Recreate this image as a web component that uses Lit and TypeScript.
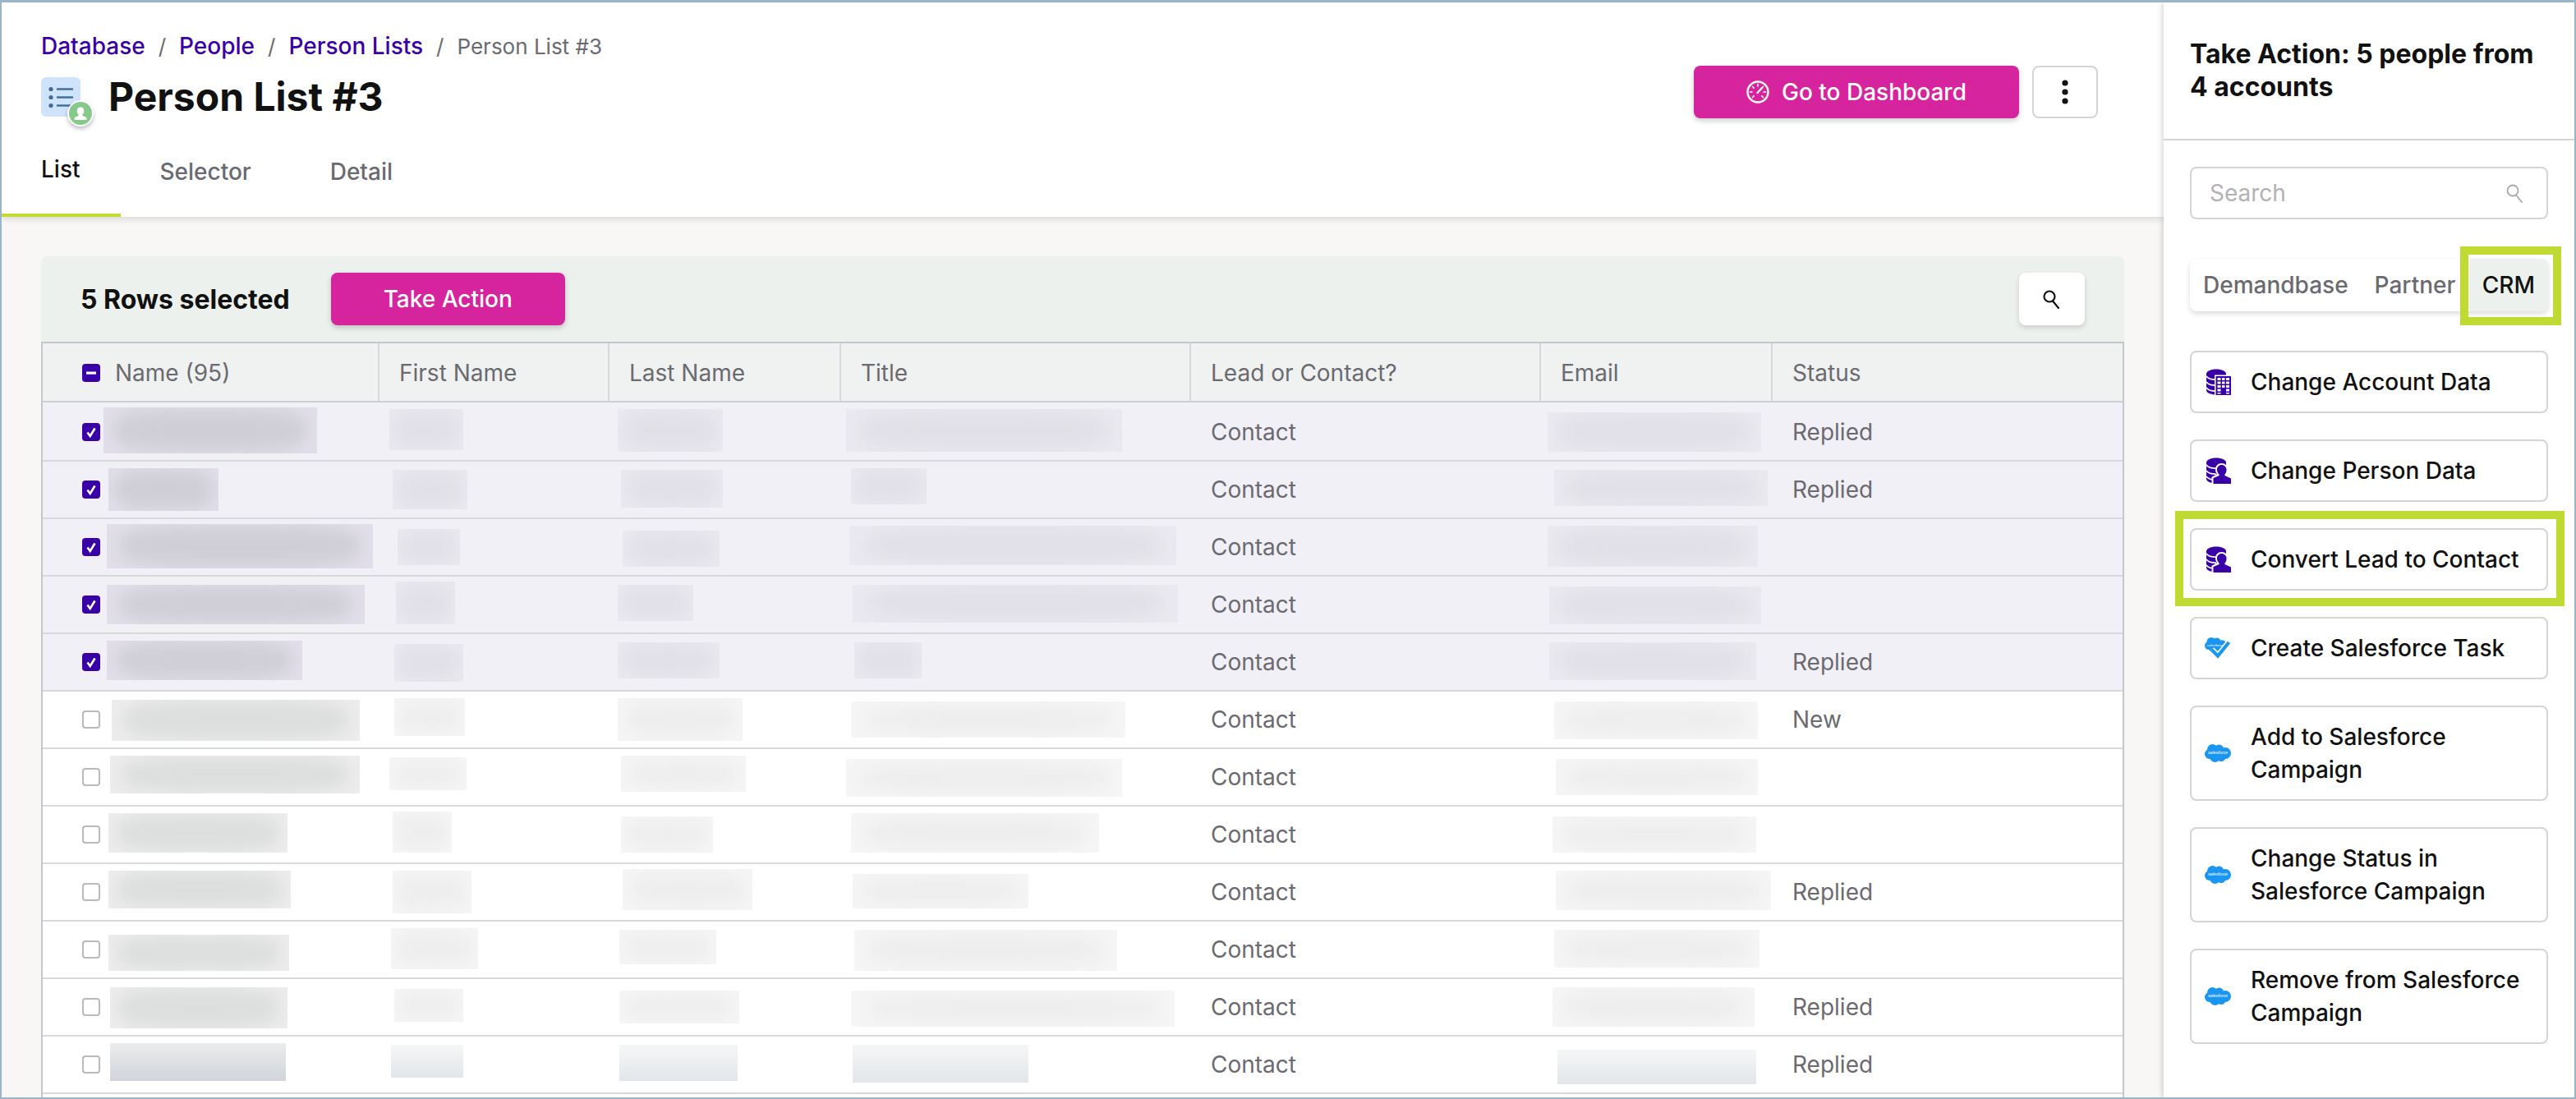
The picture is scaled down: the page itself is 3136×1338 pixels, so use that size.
import { LitElement, html, css, svg } from "lit";
import { customElement } from "lit/decorators.js";

type Box = [number, number, number, number];
interface Row {
  sel: boolean;
  status: string;
  name: Box;
  first: Box;
  last: Box;
  title: Box;
  email: Box;
}

const ROWS: Row[] = [
  { sel: true, status: "Replied", name: [126, 386, 496, 552], first: [474, 564, 498, 548], last: [752, 880, 498, 550], title: [1030, 1366, 498, 550], email: [1884, 2144, 502, 550] },
  { sel: true, status: "Replied", name: [132, 266, 570, 622], first: [478, 569, 572, 620], last: [756, 880, 572, 618], title: [1036, 1128, 570, 614], email: [1892, 2152, 572, 616] },
  { sel: true, status: "", name: [130, 454, 638, 692], first: [484, 560, 644, 688], last: [758, 876, 646, 690], title: [1034, 1432, 640, 688], email: [1884, 2140, 640, 690] },
  { sel: true, status: "", name: [130, 444, 712, 760], first: [482, 554, 708, 760], last: [752, 844, 712, 756], title: [1038, 1434, 712, 758], email: [1886, 2144, 714, 760] },
  { sel: true, status: "Replied", name: [130, 368, 780, 828], first: [480, 564, 784, 830], last: [752, 876, 782, 826], title: [1040, 1122, 782, 826], email: [1886, 2138, 782, 828] },
  { sel: false, status: "New", name: [136, 438, 852, 902], first: [480, 566, 850, 896], last: [752, 904, 850, 902], title: [1036, 1370, 854, 898], email: [1892, 2140, 854, 900] },
  { sel: false, status: "", name: [134, 438, 920, 966], first: [474, 568, 922, 962], last: [756, 908, 920, 964], title: [1030, 1366, 924, 970], email: [1894, 2140, 924, 968] },
  { sel: false, status: "", name: [132, 350, 990, 1038], first: [478, 550, 988, 1038], last: [756, 868, 994, 1038], title: [1036, 1338, 990, 1038], email: [1890, 2138, 994, 1038] },
  { sel: false, status: "Replied", name: [132, 354, 1060, 1106], first: [478, 574, 1060, 1112], last: [758, 916, 1058, 1108], title: [1038, 1252, 1064, 1106], email: [1894, 2156, 1060, 1108] },
  { sel: false, status: "", name: [132, 352, 1138, 1182], first: [476, 582, 1130, 1180], last: [754, 872, 1132, 1174], title: [1040, 1360, 1132, 1182], email: [1892, 2142, 1132, 1178] },
  { sel: false, status: "Replied", name: [134, 350, 1202, 1252], first: [480, 564, 1204, 1244], last: [754, 900, 1206, 1246], title: [1036, 1430, 1206, 1250], email: [1890, 2136, 1202, 1250] },
  { sel: false, status: "Replied", name: [134, 348, 1270, 1316], first: [476, 564, 1272, 1312], last: [754, 898, 1272, 1316], title: [1038, 1252, 1272, 1318], email: [1896, 2138, 1278, 1320] },
];

const PURPLE = "#3a00a8";

const dbBody = svg`
  <path fill="${PURPLE}" d="M2 6C2 3 7 .5 14 .5S26 3 26 6v20c0 3-5 5.5-12 5.5S2 29 2 26z" />
  <path fill="none" stroke="#fff" stroke-width="1.6" d="M2 9c2 3 7 4.2 12 4.2M2 16c2 3 7 4.2 12 4.2M2 23c2 3 7 4.2 12 4.2" />`;

const dbBuilding = html`<svg class="ico" viewBox="0 0 32 32">
  ${dbBody}
  <rect x="12" y="7.5" width="20" height="24.5" fill="#fff" />
  <rect x="13.5" y="9" width="18.5" height="23" fill="${PURPLE}" />
  <path fill="#fff" d="M15.5 11h4v3h-4zM21 11h3.5v3H21zM26 11h4v3h-4zM15.5 15.5h4v3h-4zM21 15.5h3.5v3H21zM26 15.5h4v3h-4zM15.5 20h4v3h-4zM21 20h3.5v3H21zM26 20h4v3h-4zM15.5 24.5h4v3h-4zM26 24.5h4v3h-4zM15.5 29h4v1.5h-4zM26 29h4v1.5h-4z" />
</svg>`;

const dbPerson = html`<svg class="ico" viewBox="0 0 32 32">
  ${dbBody}
  <path fill="#fff" d="M20.5 7c-4.4 0-7.5 3.4-7.5 7.6 0 2.3.8 4.2 2 5.6l-6.5 3.5V32H32v-8.3l-5-3.3c1.2-1.4 1.5-3.5 1.5-5.8C28.5 10.4 24.9 7 20.5 7z" />
  <path fill="${PURPLE}" d="M20.5 9c-3.2 0-5.5 2.5-5.5 5.7 0 2.4 1 4.6 2.6 5.8v1.5l-7.1 3V32H32v-6.5l-7.6-3.5v-1.5c1.6-1.2 2.1-3.4 2.1-5.8C26.5 11.5 23.7 9 20.5 9z" />
</svg>`;

const cloudShape = svg`
  <circle cx="9.5" cy="6.5" r="6.5" /><circle cx="17.5" cy="6" r="5.5" /><circle cx="25" cy="11" r="7" />
  <circle cx="6" cy="12" r="6" /><circle cx="12.5" cy="15.5" r="6.5" /><circle cx="20" cy="15.5" r="5.5" />`;

const cloud = html`<svg class="ico cloud" viewBox="0 0 32 22">
  <g fill="#1b96f0">${cloudShape}</g>
  <text x="16" y="12.3" text-anchor="middle" class="sf">salesforce</text>
</svg>`;

const cloudTask = html`<svg class="ico task" viewBox="0 0 32 26">
  <g fill="#1b96f0" transform="scale(.84)">${cloudShape}</g>
  <text x="12.5" y="10.5" text-anchor="middle" class="sf small">salesforce</text>
  <path fill="none" stroke="#fff" stroke-width="7.5" d="M8.5 15l7.5 7.5L29.5 6" />
  <path fill="none" stroke="#1b96f0" stroke-width="4.2" d="M8.5 15l7.5 7.5L29.5 6" />
</svg>`;

const magnifier = (c: string, w: number) => html`<svg class="mag" viewBox="0 0 24 24" fill="none" stroke="${c}" stroke-width="${w}">
  <circle cx="9" cy="9" r="6.5" /><path d="M13 14.5 20 23" stroke-linecap="round" />
</svg>`;

@customElement("app-root")
export class AppRoot extends LitElement {
  static styles = css`
    :host {
      display: flex;
      box-sizing: border-box;
      width: 3136px;
      height: 1338px;
      padding: 3px 2px 2px 2px;
      background: #9ab6c6;
      overflow: hidden;
      font-family: "Inter", "Liberation Sans", sans-serif;
      font-size: 28px;
      color: #111;
    }
    .frame { flex: 1; display: flex; min-width: 0; min-height: 0; overflow: hidden; background: #fff; }
    .main { flex: 1; min-width: 0; display: flex; flex-direction: column; background: #f8f7f5; }

    .top { position: relative; z-index: 1; height: 261px; flex: none; box-sizing: border-box; background: #fff; box-shadow: 0 2px 8px rgba(0, 0, 0, .14); display: flex; flex-direction: column; }
    .top-row { flex: 1; display: flex; justify-content: space-between; padding: 33px 80px 0 48px; }
    .crumbs { display: flex; align-items: center; height: 40px; font-size: 28px; font-weight: 500; color: #3a00a8; }
    .crumbs .sep { margin: 0 16px; color: #6a6a70; font-weight: 400; font-size: 26px; }
    .crumbs .cur { color: #6a6a70; font-weight: 400; font-size: 26px; }
    .titlerow { display: flex; align-items: center; gap: 34px; margin-top: 18px; height: 48px; }
    .listicon { position: relative; width: 48px; height: 48px; border-radius: 6px; background: #cfe3fa; }
    .listicon svg.l { display: block; width: 48px; height: 48px; }
    .badge { position: absolute; left: 32px; top: 28px; width: 32px; height: 32px; box-sizing: border-box; border: 2px solid #fff; border-radius: 50%; background: #86c98a; box-shadow: 0 3px 5px rgba(0, 0, 0, .25); }
    .badge svg { display: block; width: 28px; height: 28px; }
    h1 { margin: 0; font-size: 48px; font-weight: 700; line-height: 48px; color: #111; }
    .actions { display: flex; gap: 16px; margin-top: 44px; height: 64px; }
    .btn-pink { display: flex; align-items: center; justify-content: center; height: 64px; border: 0; border-radius: 8px; background: #d6249f; color: #fff; font: 500 28px "Inter", sans-serif; box-shadow: 0 3px 6px rgba(0, 0, 0, .2); }
    .go { width: 396px; gap: 15px; }
    .go svg { width: 28px; height: 28px; }
    .kebab { box-sizing: border-box; width: 80px; height: 64px; border: 2px solid #d4d4d4; border-radius: 8px; background: #fff; display: flex; align-items: center; justify-content: center; }
    .kebab svg { width: 10px; height: 32px; }

    .tabs { display: flex; height: 104px; flex: none; }
    .tab { display: flex; align-items: center; box-sizing: border-box; padding: 0 48px 2px; border-bottom: 4px solid transparent; color: #6a6a70; font-weight: 500; }
    .tab.on { padding: 0 49px 8px 48px; color: #111; border-bottom-color: #c3da30; }

    .content { flex: 1; min-height: 0; padding: 48px 48px 0 48px; display: flex; flex-direction: column; }
    .toolbar { height: 104px; flex: none; box-sizing: border-box; display: flex; align-items: center; padding: 0 48px; background: #edf1ed; border-radius: 8px 8px 0 0; }
    .count { font-size: 32px; font-weight: 700; margin-right: 50px; }
    .take { width: 285px; }
    .spacer { flex: 1; }
    .iconbtn { width: 80px; height: 64px; background: #fff; border-radius: 8px; box-shadow: 0 3px 6px rgba(0, 0, 0, .15); display: flex; align-items: center; justify-content: center; }
    .mag { width: 24px; height: 24px; }

    .table { flex: 1; min-height: 0; overflow: hidden; background: #fff; border: solid #c4c8cc; border-width: 2px 2px 0 2px; }
    .grid { display: grid; grid-template-columns: 410px 280px 282px 426px 426px 282px 426px; }
    .head { height: 72px; box-sizing: border-box; background: #f0f1f1; border-bottom: 2px solid #ccced2; color: #6a6a70; }
    .head > div { display: flex; align-items: center; box-sizing: border-box; padding: 1px 0 0 24px; border-right: 2px solid #d4d8dc; }
    .head > div:last-child { border-right: 0; }
    .head > div:first-child, .row > div:first-child { padding-left: 48px; gap: 18px; }
    .row { position: relative; height: 70px; box-sizing: border-box; border-bottom: 2px solid #d6dadd; color: #6a6a70; background: #fff; }
    .head + .row { height: 72px; padding-top: 1px; }
    .row.sel { background: #f2f0f7; }
    .row > div { display: flex; align-items: center; box-sizing: border-box; padding-left: 24px; }

    .cb { flex: none; width: 22px; height: 22px; box-sizing: border-box; border-radius: 4px; border: 2px solid #b8bac0; background: #fff; }
    .cb.on { border: 0; background: #3a00a8; }
    .cb svg { display: block; width: 22px; height: 22px; }

    .patch { position: absolute; overflow: hidden; background: #f6f6f6; }
    .patch i { position: absolute; inset: 4% 5%; border-radius: 30%; background: #eeeeee; filter: blur(10px); }
    .patch.n { background: #ecedec; }
    .patch.n i { background: #dcdddd; }
    .sel .patch { background: #ebe9f0; }
    .sel .patch i { background: #e1e0e7; }
    .sel .patch.n { background: #e2dfea; }
    .sel .patch.n i { background: #cfced6; }
    .fade .patch { background: linear-gradient(#f5f6f6, #e2e6e9); }
    .fade .patch i { background: transparent; }
    .fade .patch.n { background: linear-gradient(#ebecec, #d1d5d9); }

    aside { flex: none; width: 500px; box-sizing: border-box; position: relative; z-index: 2; background: #fff; box-shadow: -2px 0 6px rgba(0, 0, 0, .16); display: flex; flex-direction: column; }
    .aside-head { height: 168px; flex: none; box-sizing: border-box; padding: 43px 32px 0; border-bottom: 2px solid #d4d4d4; font-size: 32px; line-height: 40px; font-weight: 700; }
    .aside-body { padding: 32px 32px 0; display: flex; flex-direction: column; }
    .search { height: 64px; box-sizing: border-box; border: 2px solid #d4d4d4; border-radius: 8px; display: flex; align-items: center; justify-content: space-between; padding: 0 26px 0 22px; color: #b2b2b6; }
    .seg { margin-top: 48px; height: 64px; display: flex; background: #fff; border-radius: 8px; box-shadow: 0 3px 6px rgba(0, 0, 0, .14); color: #6a6a70; font-weight: 500; }
    .seg span { display: flex; align-items: center; padding: 0 16px; position: relative; }
    .seg .crm { margin-left: auto; color: #111; background: #edf1ed; border-radius: 0 8px 8px 0; }
    .mark { position: absolute; border: 10px solid #bfda33; pointer-events: none; }
    .crm .mark { left: -11px; right: -16px; top: -15px; bottom: -17px; }
    .act .mark { left: -20px; right: -22px; top: -23px; bottom: -21px; }

    .list { margin-top: 48px; display: flex; flex-direction: column; gap: 32px; }
    .act { position: relative; display: flex; align-items: center; gap: 24px; box-sizing: border-box; min-height: 76px; padding: 16px 16px; border: 2px solid #d4d4d4; border-radius: 8px; line-height: 40px; font-weight: 500; color: #111; }
    .ico { flex: none; width: 32px; height: 32px; }
    .ico.cloud { height: 22px; }
    .ico.task { height: 26px; }
    .sf { font: italic 5.3px "Liberation Sans", sans-serif; fill: #fff; }
    .sf.small { font-size: 4.3px; }
  `;

  private patch(b: Box, rowTop: number, cls = "") {
    const s = `left:${b[0] - 52}px;top:${b[2] - rowTop}px;width:${b[1] - b[0]}px;height:${b[3] - b[2]}px`;
    return html`<span class="patch ${cls}" style=${s}><i></i></span>`;
  }

  private renderRow(r: Row, i: number) {
    const top = i === 0 ? 490 : 492 + 70 * i;
    return html`<div class="grid row ${r.sel ? "sel" : ""} ${i === 11 ? "fade" : ""}">
      <div>
        <span class="cb ${r.sel ? "on" : ""}">
          ${r.sel
            ? html`<svg viewBox="0 0 22 22"><path d="M6.5 11.5l3.2 4.5 5.8-9.5" fill="none" stroke="#fff" stroke-width="2.6" /></svg>`
            : ""}
        </span>
        ${this.patch(r.name, top, "n")}
      </div>
      <div>${this.patch(r.first, top)}</div>
      <div>${this.patch(r.last, top)}</div>
      <div>${this.patch(r.title, top)}</div>
      <div>Contact</div>
      <div>${this.patch(r.email, top)}</div>
      <div>${r.status}</div>
    </div>`;
  }

  render() {
    const actions = [
      { t: "Change Account Data", i: dbBuilding },
      { t: "Change Person Data", i: dbPerson },
      { t: "Convert Lead to Contact", i: dbPerson, mark: true },
      { t: "Create Salesforce Task", i: cloudTask },
      { t: "Add to Salesforce Campaign", i: cloud },
      { t: "Change Status in Salesforce Campaign", i: cloud },
      { t: "Remove from Salesforce Campaign", i: cloud },
    ];
    return html`<div class="frame">
      <div class="main">
        <div class="top">
          <div class="top-row">
            <div>
              <div class="crumbs">
                <span>Database</span><span class="sep">/</span><span>People</span><span class="sep">/</span><span>Person Lists</span><span class="sep">/</span><span class="cur">Person List #3</span>
              </div>
              <div class="titlerow">
                <div class="listicon">
                  <svg class="l" viewBox="0 0 48 48">
                    <g fill="#3f6b99">
                      <circle cx="12" cy="14.5" r="2.6" /><circle cx="12" cy="24.5" r="2.6" /><circle cx="12" cy="34.5" r="2.6" />
                      <rect x="19" y="13.3" width="20" height="2.4" /><rect x="19" y="23.3" width="20" height="2.4" /><rect x="19" y="33.3" width="20" height="2.4" />
                    </g>
                  </svg>
                  <div class="badge">
                    <svg viewBox="0 0 28 28"><path fill="#fff" d="M14 6.5c-2.6 0-4.3 2-4.3 4.6 0 1.9.8 3.6 2 4.5v1.2l-5 2.3v2.9h14.6v-2.9l-5-2.3v-1.2c1.2-.9 2-2.6 2-4.5 0-2.6-1.7-4.6-4.3-4.6z" /></svg>
                  </div>
                </div>
                <h1>Person List #3</h1>
              </div>
            </div>
            <div class="actions">
              <div class="btn-pink go">
                <svg viewBox="0 0 28 28" fill="none" stroke="#fff" stroke-linecap="round">
                  <circle cx="14" cy="14" r="12.5" stroke-width="2.4" />
                  <path stroke-width="1.6" d="M14 4.5V7M7.3 7.3l1.8 1.8M20.7 7.3l-1 1M4.5 14H7M23.5 14H21M7.3 20.7l1.8-1.8M20.7 20.7l-1.8-1.8" />
                  <path stroke-width="2.4" d="M13.5 15l5.500-6" />
                </svg>
                <span>Go to Dashboard</span>
              </div>
              <div class="kebab">
                <svg viewBox="0 0 10 32" fill="#111"><circle cx="5" cy="5" r="3.6" /><circle cx="5" cy="16" r="3.6" /><circle cx="5" cy="27" r="3.6" /></svg>
              </div>
            </div>
          </div>
          <div class="tabs">
            <div class="tab on">List</div>
            <div class="tab">Selector</div>
            <div class="tab">Detail</div>
          </div>
        </div>
        <div class="content">
          <div class="toolbar">
            <span class="count">5 Rows selected</span>
            <div class="btn-pink take">Take Action</div>
            <span class="spacer"></span>
            <div class="iconbtn">${magnifier("#111", 2.2)}</div>
          </div>
          <div class="table">
            <div class="grid head">
              <div><span class="cb on"><svg viewBox="0 0 22 22"><rect x="5" y="9.5" width="12" height="3.2" fill="#fff" /></svg></span><span>Name (95)</span></div>
              <div>First Name</div>
              <div>Last Name</div>
              <div>Title</div>
              <div>Lead or Contact?</div>
              <div>Email</div>
              <div>Status</div>
            </div>
            ${ROWS.map((r, i) => this.renderRow(r, i))}
          </div>
        </div>
      </div>
      <aside>
        <div class="aside-head">Take Action: 5 people from 4 accounts</div>
        <div class="aside-body">
          <div class="search"><span>Search</span>${magnifier("#a8a8ac", 1.8)}</div>
          <div class="seg">
            <span>Demandbase</span><span>Partner</span><span class="crm">CRM<b class="mark"></b></span>
          </div>
          <div class="list">
            ${actions.map(
              (a) => html`<div class="act">${a.i}<span>${a.t}</span>${a.mark ? html`<b class="mark"></b>` : ""}</div>`
            )}
          </div>
        </div>
      </aside>
    </div>`;
  }
}
